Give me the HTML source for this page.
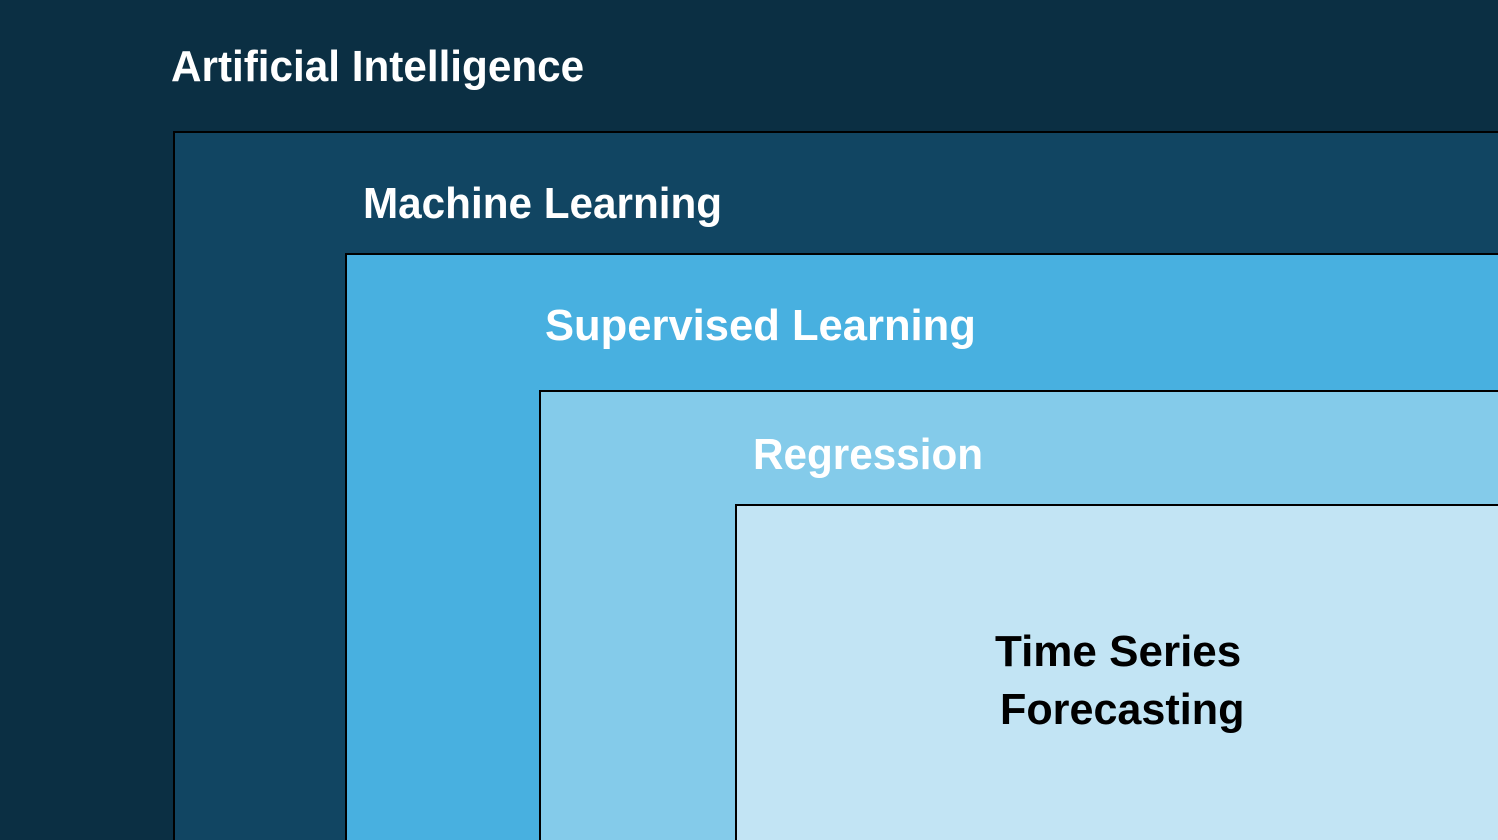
<!DOCTYPE html>
<html><head><style>
html,body{margin:0;padding:0;width:1498px;height:840px;overflow:hidden}
body{background:#0b2f43;position:relative;font-family:"Liberation Sans",sans-serif;font-weight:bold}
.b{position:absolute;border:2px solid #000;border-right:0;border-bottom:0;box-sizing:border-box;right:0;bottom:0}
.t{position:absolute;color:#fff;white-space:nowrap;font-size:44px;line-height:1;transform-origin:left top;transform:scaleX(0.96)}
</style></head><body>
<div class="t" style="left:171px;top:45px">Artificial Intelligence</div>
<div class="b" style="left:173px;top:131px;background:#114562"></div>
<div class="t" style="left:363px;top:182px">Machine Learning</div>
<div class="b" style="left:345px;top:253px;background:#48b0e0"></div>
<div class="t" style="left:545px;top:304px;transform:scaleX(0.99)">Supervised Learning</div>
<div class="b" style="left:539px;top:390px;background:#84cbea"></div>
<div class="t" style="left:753px;top:433px">Regression</div>
<div class="b" style="left:735px;top:504px;background:#c2e4f4"></div>
<div class="t" style="left:995px;top:630px;color:#000;transform:scaleX(1.0)">Time Series</div>
<div class="t" style="left:1000px;top:688px;color:#000;transform:scaleX(0.98)">Forecasting</div>
</body></html>
